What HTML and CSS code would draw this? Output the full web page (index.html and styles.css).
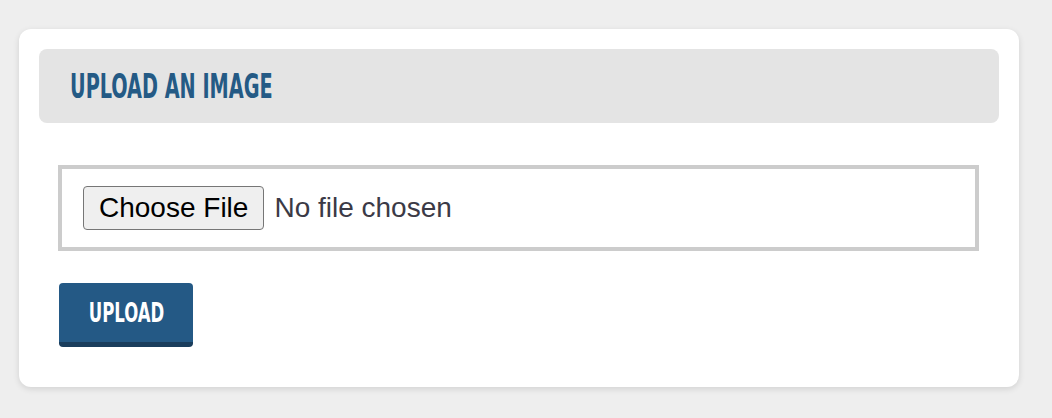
FILE: index.html
```html
<!DOCTYPE html>
<html lang="en">
<head>
<meta charset="utf-8">
<title>Upload an image</title>
<link rel="stylesheet" href="styles.css">
</head>
<body>
<div class="card">
  <div class="card-header">
    <h2 class="card-title"><span class="condensed">UPLOAD AN IMAGE</span></h2>
  </div>
  <form class="card-body">
    <div class="file-box">
      <input class="file-input" type="file" name="image">
    </div>
    <button class="upload-btn" type="button"><span class="condensed">UPLOAD</span></button>
  </form>
</div>
</body>
</html>
```

FILE: styles.css
```css
html, body {
  margin: 0;
  padding: 0;
}

body {
  background: #eeeeee;
  font-family: "Liberation Sans", Arial, sans-serif;
  width: 1052px;
  height: 418px;
  overflow: hidden;
}

.card {
  box-sizing: border-box;
  width: 1000px;
  margin: 29px 0 0 19px;
  padding: 20px 20px 40px;
  background: #ffffff;
  border-radius: 12px;
  box-shadow: 0 2px 6px rgba(0, 0, 0, 0.12);
}

.card-header {
  height: 74px;
  box-sizing: border-box;
  display: flex;
  align-items: center;
  padding: 0 31px;
  background: #e4e4e4;
  border-radius: 8px;
}

.card-title {
  margin: 0;
  font-family: "DejaVu Sans Condensed", "Liberation Sans", sans-serif;
  font-weight: 700;
  font-size: 34px;
  line-height: 1;
  color: #245a85;
}

.card-title .condensed {
  display: inline-block;
  transform: scaleX(0.63);
  transform-origin: left center;
  white-space: nowrap;
}

.card-body {
  display: flex;
  flex-direction: column;
  align-items: flex-start;
  gap: 32px;
  padding: 42px 20px 0 19px;
  margin: 0;
}

.file-box {
  box-sizing: border-box;
  align-self: stretch;
  height: 86px;
  display: flex;
  align-items: center;
  padding: 0 21px;
  border: 4px solid #cccccc;
}

.file-input {
  font-family: "Liberation Sans", Arial, sans-serif;
  font-size: 28px;
  color: #3b3a46;
  width: 100%;
}

.file-input::file-selector-button {
  font-family: "Liberation Sans", Arial, sans-serif;
  font-size: 28px;
  line-height: 32px;
  color: #000000;
  background: #efefef;
  border: 1px solid #767676;
  border-radius: 4px;
  padding: 5px 15px;
  margin-right: 10px;
}

.upload-btn {
  box-sizing: border-box;
  width: 134px;
  height: 64px;
  margin-left: 1px;
  display: flex;
  align-items: center;
  justify-content: center;
  padding: 0;
  background: #245985;
  border: none;
  border-bottom: 5px solid #1a3d5c;
  border-radius: 4px;
  color: #ffffff;
  font-family: "DejaVu Sans Condensed", "Liberation Sans", sans-serif;
  font-weight: 700;
  font-size: 27px;
  line-height: 1;
  cursor: pointer;
}

.upload-btn .condensed {
  display: inline-block;
  transform: scaleX(0.68);
  white-space: nowrap;
}
```
